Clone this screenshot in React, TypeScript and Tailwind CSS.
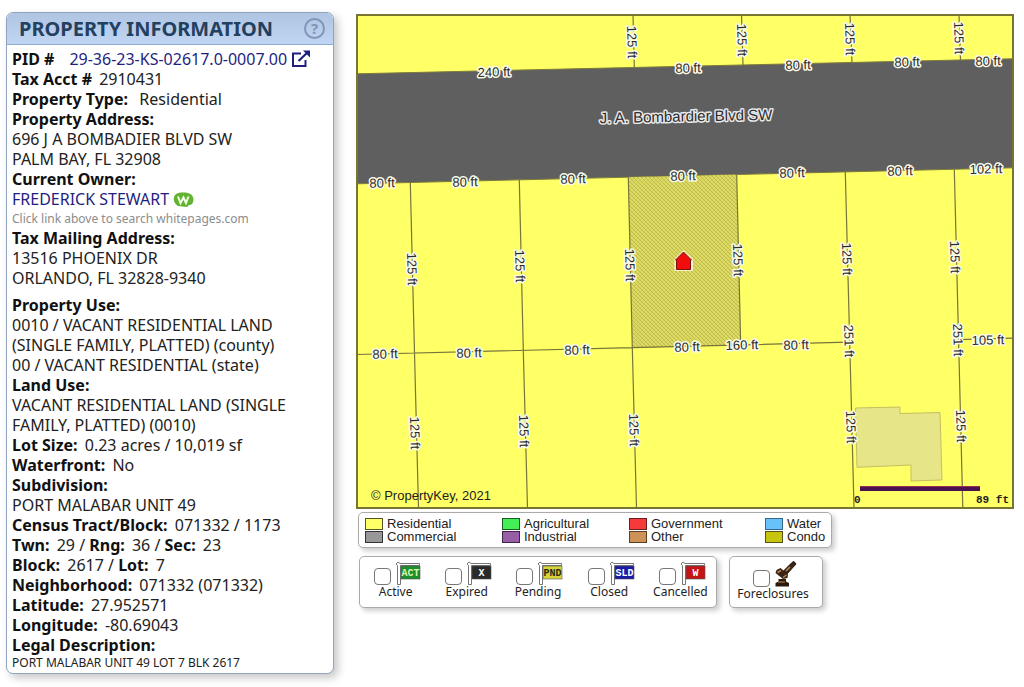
import type { ReactNode } from "react";

type Label = { x: number; y: number; text: string; turn: number };

const across = -1.4;
const down = 88.5;

const labels: Label[] = [
  { x: 494, y: 72, text: "240 ft", turn: across },
  { x: 688, y: 68, text: "80 ft", turn: across },
  { x: 798, y: 65, text: "80 ft", turn: across },
  { x: 907, y: 62, text: "80 ft", turn: across },
  { x: 988, y: 61, text: "80 ft", turn: across },
  { x: 382, y: 183, text: "80 ft", turn: across },
  { x: 465, y: 182, text: "80 ft", turn: across },
  { x: 573, y: 179, text: "80 ft", turn: across },
  { x: 683, y: 176, text: "80 ft", turn: across },
  { x: 792, y: 173, text: "80 ft", turn: across },
  { x: 900, y: 171, text: "80 ft", turn: across },
  { x: 986, y: 169, text: "102 ft", turn: across },
  { x: 385, y: 354, text: "80 ft", turn: across },
  { x: 469, y: 353, text: "80 ft", turn: across },
  { x: 577, y: 350, text: "80 ft", turn: across },
  { x: 687, y: 347, text: "80 ft", turn: across },
  { x: 742, y: 345, text: "160 ft", turn: across },
  { x: 796, y: 345, text: "80 ft", turn: across },
  { x: 988, y: 340, text: "105 ft", turn: across },
  { x: 632, y: 42, text: "125 ft", turn: down },
  { x: 742, y: 40, text: "125 ft", turn: down },
  { x: 850, y: 39, text: "125 ft", turn: down },
  { x: 959, y: 38, text: "125 ft", turn: down },
  { x: 412, y: 269, text: "125 ft", turn: down },
  { x: 520, y: 266, text: "125 ft", turn: down },
  { x: 630, y: 265, text: "125 ft", turn: down },
  { x: 738, y: 260, text: "125 ft", turn: down },
  { x: 847, y: 259, text: "125 ft", turn: down },
  { x: 955, y: 257, text: "125 ft", turn: down },
  { x: 849, y: 341, text: "251 ft", turn: down },
  { x: 958, y: 340, text: "251 ft", turn: down },
  { x: 415, y: 433, text: "125 ft", turn: down },
  { x: 524, y: 431, text: "125 ft", turn: down },
  { x: 634, y: 430, text: "125 ft", turn: down },
  { x: 851, y: 427, text: "125 ft", turn: down },
  { x: 961, y: 426, text: "125 ft", turn: down },
];

function ParcelMap() {
  return (
    <svg viewBox="356 14 658 495" className="block w-full" role="img" aria-label="Parcel map">
      <defs>
        <pattern id="hatch" width="4" height="4" patternUnits="userSpaceOnUse">
          <rect width="4" height="4" fill="#dfdc62" />
          <path d="M0 0L4 4M-1 3L1 5M3 -1L5 1" stroke="#bfbb50" strokeWidth="1" />
          <path d="M0 4L4 0" stroke="#c9c556" strokeWidth="0.6" />
        </pattern>
      </defs>
      <rect x="356" y="14" width="658" height="495" fill="#ffff66" />
      <path d="M357 73.8L1013 58.8V167.8L357 183.8Z" fill="#5f5f5f" stroke="#7d7a3c" />
      <path d="M628.3 177.3L736.7 174.7L740.7 345L632.3 347.7Z" fill="url(#hatch)" />
      <path
        d="M855.5 408L900 407V413.5L940 412.5L942 480L911 481V465L857 467.3Z"
        fill="#e6e688"
        stroke="#c3bf62"
      />
      <path
        d="M633 14L634.3 67M741.5 14L743 65M850 14L852 62.5M959 14L960.5 60M410.3 182.5L414.5 353L418.5 508M519.3 180L523.3 350.5L527.5 508M628.3 177.3L632.3 347.7L636.5 508M736.7 174.7L740.7 345M845.3 172L854 508M954.3 169.5L962.8 508M357 354.5L632.3 347.7L848.5 342.2M958 339.7L1013 338.2"
        fill="none"
        stroke="#77743a"
        strokeWidth="1.2"
      />
      <g
        fontFamily="'Liberation Sans', Arial, sans-serif"
        fontSize="13"
        textAnchor="middle"
        fill="#2b2b2b"
        stroke="#fbfbe8"
        strokeWidth="3"
        strokeLinejoin="round"
        paintOrder="stroke"
      >
        {labels.map((l) => (
          <text key={`${l.x}-${l.y}`} transform={`translate(${l.x} ${l.y}) rotate(${l.turn})`} y="4.5">
            {l.text}
          </text>
        ))}
        <text transform="translate(686 116.5) rotate(-1.2)" y="5" fontSize="15" stroke="#e8e8e8">
          J. A. Bombardier Blvd SW
        </text>
      </g>
      <path d="M683.5 250L693 259V271H674.5V259Z" fill="#f6f2c8" />
      <path d="M683.5 252L691.5 260H690.5V269.5H676.5V260H675.5Z" fill="#f20d0d" stroke="#7a1010" />
      <rect x="860" y="486.5" width="120" height="4.5" fill="#4a1050" />
      <path d="M860 486.5H980" stroke="#93304e" />
      <g fontFamily="'Liberation Mono', monospace" fontSize="11" fontWeight="700" fill="#222">
        <text x="854" y="503">0</text>
        <text x="976" y="503">89 ft</text>
      </g>
      <text x="371" y="500" fontFamily="'Liberation Sans', Arial, sans-serif" fontSize="13" fill="#222">
        © PropertyKey, 2021
      </text>
      <rect x="357" y="15" width="656" height="493" fill="none" stroke="#77752f" strokeWidth="2" />
    </svg>
  );
}

const swatches = [
  { name: "Residential", box: "bg-[#ffff66] border-[#55552a]" },
  { name: "Agricultural", box: "bg-[#44ee55] border-[#1c5a24]" },
  { name: "Government", box: "bg-[#f43a3a] border-[#6b2020]" },
  { name: "Water", box: "bg-[#66c2f8] border-[#36688a]" },
  { name: "Commercial", box: "bg-[#989898] border-[#333333]" },
  { name: "Industrial", box: "bg-[#985fa6] border-[#3f2646]" },
  { name: "Other", box: "bg-[#cc9258] border-[#5c4022]" },
  { name: "Condo", box: "bg-[#c6c40c] border-[#55541a]" },
];

const flags = [
  { name: "Active", code: "ACT", fill: "#1c8f2a", ink: "#d8f5b8" },
  { name: "Expired", code: "X", fill: "#2a2a2a", ink: "#ffffff" },
  { name: "Pending", code: "PND", fill: "#d6d43a", ink: "#2a2a10" },
  { name: "Closed", code: "SLD", fill: "#1a1aa8", ink: "#ffffff" },
  { name: "Cancelled", code: "W", fill: "#c41414", ink: "#ffffff" },
];

function Flag({ code, fill, ink }: { code: string; fill: string; ink: string }) {
  return (
    <svg width="26" height="24" viewBox="0 0 26 24" aria-hidden="true">
      <path d="M2.5 23.5V4.5L1 3L3 1L5 2.5H24.5V4.5H5.5V23.5Z" fill="#fff" stroke="#777" />
      <rect x="6" y="5" width="19" height="13" fill={fill} stroke="#555" strokeWidth="0.6" />
      <text
        x="15.5"
        y="15"
        textAnchor="middle"
        fontFamily="'Liberation Mono', monospace"
        fontWeight="700"
        fontSize="10"
        fill={ink}
      >
        {code}
      </text>
    </svg>
  );
}

function Gavel() {
  return (
    <svg width="23" height="26" viewBox="0 0 23 26" aria-hidden="true">
      <path d="M8.5 11L18 1.5L20 0.5L22 3L12 14Z" fill="#3a2413" stroke="#1c120a" />
      <path d="M2.5 9L6.5 7L14 13.5L13.5 17L9 18L1.5 12Z" fill="#3a2413" />
      <path d="M3.5 11.5L7 9.5M9 16.5L12.5 14M12 10L16 6" stroke="#b98b4a" strokeWidth="1.5" />
      <path d="M4.5 18H12V20.5L15 22V25.5H1.5V22L4.5 20.5Z" fill="#2a1a0e" />
      <path d="M4 21H11" stroke="#b98b4a" />
    </svg>
  );
}

function Option({ name, children }: { name: string; children: ReactNode }) {
  return (
    <label className="flex flex-col items-center text-[12px] leading-[14px] text-[#222]">
      <span className="flex items-end gap-1 pl-1">
        <input
          type="checkbox"
          className="size-[17px] appearance-none rounded-[4px] border border-[#777] bg-white checked:bg-[#3b6fc4]"
        />
        {children}
      </span>
      {name}
    </label>
  );
}

function B({ children }: { children: ReactNode }) {
  return <b className="mr-[3px] font-bold text-[#111]">{children}</b>;
}

export default function App() {
  return (
    <main className="flex min-h-screen items-start gap-[22px] bg-white pt-3 pr-2.5 pb-3 pl-1.5 font-['Noto_Sans','Open_Sans',sans-serif] text-[#222]">
      <section className="w-[328px] shrink-0 overflow-hidden rounded-[7px] border border-[#8ea4bf] bg-white shadow-[4px_4px_8px_rgba(0,0,0,0.22)]">
        <header className="flex h-8 items-center justify-between border-b border-[#8fabd0] bg-gradient-to-b from-[#afc5e2] to-[#c0d5f3] pr-2 pl-3">
          <h1 className="text-[20px] leading-8 font-bold text-[#24405f]">PROPERTY INFORMATION</h1>
          <button
            type="button"
            aria-label="Help"
            className="flex size-[21px] items-center justify-center rounded-full border-2 border-[#8095b8] text-[15px] leading-none font-bold text-[#8095b8]"
          >
            ?
          </button>
        </header>
        <div className="px-[5px] pt-1 pb-[3px] text-[16px] leading-5">
          <p className="flex items-center">
            <B>PID #</B>
            <a href="#pid" className="ml-3 flex items-center gap-1 text-[#1f1f80]">
              29-36-23-KS-02617.0-0007.00
              <svg width="20" height="18" viewBox="0 0 20 18" fill="none" stroke="#1f1f80" aria-hidden="true">
                <path d="M10 3.5H2V16H14.5V10" strokeWidth="2" />
                <path d="M7.5 11L17 2" strokeWidth="2.2" />
                <path d="M12 0.5H19V7.5Z" fill="#1f1f80" stroke="none" />
              </svg>
            </a>
          </p>
          <p><B>Tax Acct #</B> 2910431</p>
          <p><B>Property Type:</B> &nbsp;Residential</p>
          <p><B>Property Address:</B></p>
          <p>696 J A BOMBADIER BLVD SW</p>
          <p>PALM BAY, FL 32908</p>
          <p><B>Current Owner:</B></p>
          <p>
            <a href="#owner" className="flex items-center gap-1 text-[#1f1f80]">
              FREDERICK STEWART
              <svg width="21" height="15" viewBox="0 0 21 15" aria-hidden="true">
                <path d="M1 5C2 1 7 0 11 0.5C17 0 21 4 20.5 8C20 11 19 13 16 13L14 15L5 14C2 12 0 9 1 5Z" fill="#62b332" />
                <path d="M5 4.5L7.5 11L10.5 5.5L13 11L15.5 4.5" fill="none" stroke="#f4ffe8" strokeWidth="2" />
              </svg>
            </a>
          </p>
          <p className="text-[12px] leading-[19px] text-[#8c8c8c]">Click link above to search whitepages.com</p>
          <p><B>Tax Mailing Address:</B></p>
          <p>13516 PHOENIX DR</p>
          <p>ORLANDO, FL 32828-9340</p>
          <p className="mt-[7px]"><B>Property Use:</B></p>
          <p>0010 / VACANT RESIDENTIAL LAND<br />(SINGLE FAMILY, PLATTED) (county)</p>
          <p>00 / VACANT RESIDENTIAL (state)</p>
          <p><B>Land Use:</B></p>
          <p>VACANT RESIDENTIAL LAND (SINGLE<br />FAMILY, PLATTED) (0010)</p>
          <p><B>Lot Size:</B> 0.23 acres / 10,019 sf</p>
          <p><B>Waterfront:</B> No</p>
          <p><B>Subdivision:</B></p>
          <p>PORT MALABAR UNIT 49</p>
          <p><B>Census Tract/Block:</B> 071332 / 1173</p>
          <p><B>Twn:</B> 29 / <B>Rng:</B> 36 / <B>Sec:</B> 23</p>
          <p><B>Block:</B> 2617 / <B>Lot:</B> 7</p>
          <p><B>Neighborhood:</B> 071332 (071332)</p>
          <p><B>Latitude:</B> 27.952571</p>
          <p><B>Longitude:</B> -80.69043</p>
          <p><B>Legal Description:</B></p>
          <p className="text-[12px] leading-[15px]">PORT MALABAR UNIT 49 LOT 7 BLK 2617</p>
        </div>
      </section>

      <section className="min-w-0 flex-1 pt-0.5">
        <ParcelMap />
        <div className="mt-[3px] ml-0.5 grid w-fit grid-cols-[137px_127px_136px_auto] rounded-[5px] border border-[#aaa] bg-white py-1 pr-1.5 pl-1.5 font-['Liberation_Sans',Arial,sans-serif] text-[13px] leading-[13px] shadow-[3px_3px_5px_rgba(0,0,0,0.2)]">
          {swatches.map((s) => (
            <div key={s.name} className="flex h-[13px] items-center gap-1">
              <span className={`h-3 w-[18px] border ${s.box}`} />
              {s.name}
            </div>
          ))}
        </div>
        <div className="mt-2 ml-[3px] flex gap-3">
          <div className="grid w-[358px] grid-cols-5 rounded-[5px] border border-[#aaa] bg-white pt-1 pb-1.5 shadow-[3px_3px_5px_rgba(0,0,0,0.2)]">
            {flags.map((f) => (
              <Option key={f.name} name={f.name}>
                <Flag code={f.code} fill={f.fill} ink={f.ink} />
              </Option>
            ))}
          </div>
          <div className="w-[94px] rounded-[5px] border border-[#aaa] bg-white pt-1 pr-1.5 pb-1.5 shadow-[3px_3px_5px_rgba(0,0,0,0.2)]">
            <Option name="Foreclosures">
              <Gavel />
            </Option>
          </div>
        </div>
      </section>
    </main>
  );
}
